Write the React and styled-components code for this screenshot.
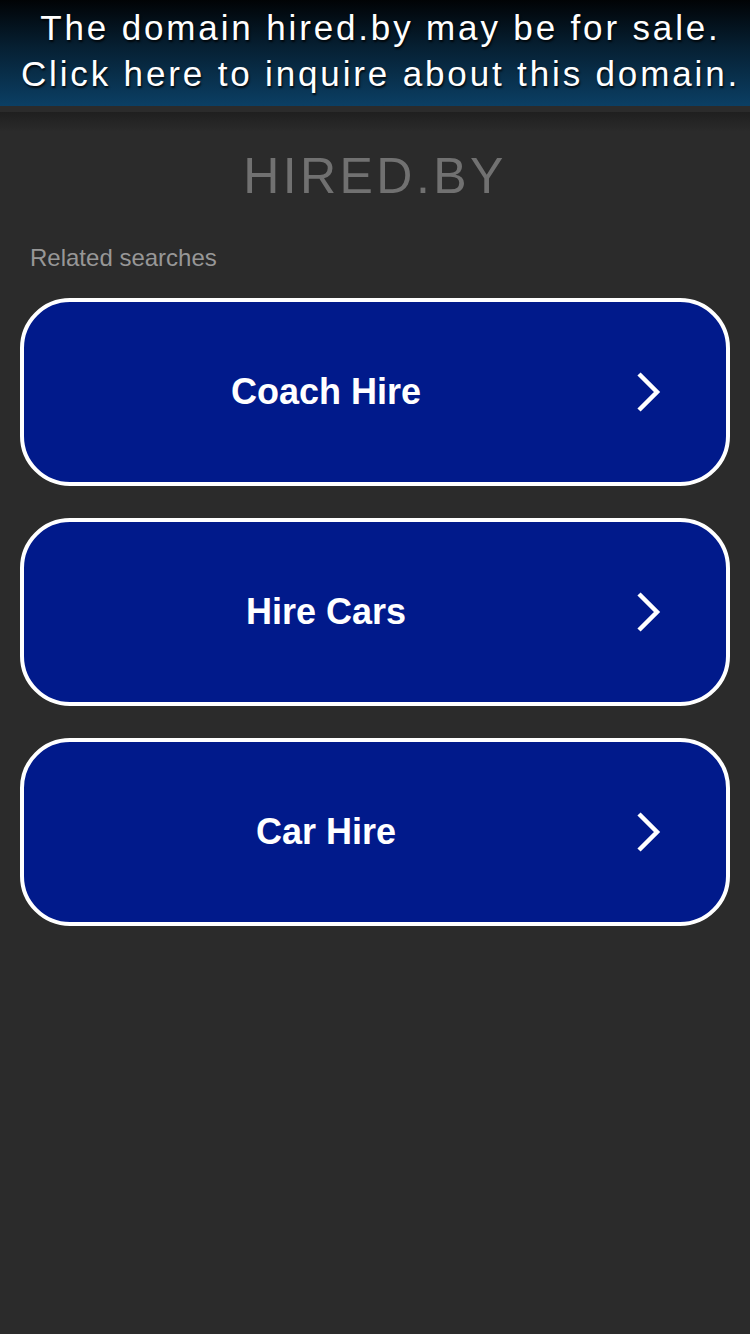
import React from "react";
import styled, { createGlobalStyle } from "styled-components";

const Global = createGlobalStyle`
  html, body { margin: 0; padding: 0; background: #2b2b2b; }
  body { font-family: "Liberation Sans", Arial, sans-serif; }
`;

const Page = styled.div`
  min-height: 1334px;
  background: #2b2b2b;
  display: flex;
  flex-direction: column;
`;

const Banner = styled.a`
  display: block;
  height: 106px;
  box-sizing: border-box;
  padding: 5px 0 0 11px;
  background: linear-gradient(to bottom, #010305 0%, #062033 45%, #0b3f64 100%);
  color: #fff;
  text-decoration: none;
  text-align: center;
  font-size: 35px;
  line-height: 46px;
  letter-spacing: 2.85px;
  text-shadow: 1px 2px 2px rgba(0, 0, 0, 0.8);
`;

const Main = styled.main`
  background:
    linear-gradient(to bottom, #2b2b2b 0, #2b2b2b 6px, #1f1f1f 6px, #2b2b2b 26px) top / 100% 26px no-repeat,
    #2b2b2b;
  padding: 38px 20px 0;
  display: flex;
  flex-direction: column;
`;

const Title = styled.h1`
  margin: 0;
  text-align: center;
  font-weight: normal;
  font-size: 50px;
  line-height: 64px;
  letter-spacing: 3.4px;
  color: #717171;
`;

const Label = styled.div`
  margin: 36px 0 0 10px;
  font-size: 24px;
  line-height: 28px;
  color: #979797;
`;

const List = styled.div`
  margin-top: 26px;
  display: flex;
  flex-direction: column;
  gap: 32px;
`;

const Card = styled.a`
  display: flex;
  align-items: center;
  height: 188px;
  box-sizing: border-box;
  border: 4px solid #fff;
  border-radius: 50px;
  background: #011a8b;
  color: #fff;
  text-decoration: none;
  padding-right: 64px;
`;

const CardText = styled.span`
  flex: 1;
  text-align: center;
  font-weight: bold;
  font-size: 36px;
`;

const Arrow = styled.svg`
  width: 26px;
  height: 40px;
  margin-left: 8px;
  flex: none;
`;

const items = ["Coach Hire", "Hire Cars", "Car Hire"];

export default function App() {
  return (
    <Page>
      <Global />
      <Banner href="#">
        The domain hired.by may be for sale.
        <br />
        Click here to inquire about this domain.
      </Banner>
      <Main>
        <Title>HIRED.BY</Title>
        <Label>Related searches</Label>
        <List>
          {items.map((t) => (
            <Card href="#" key={t}>
              <CardText>{t}</CardText>
              <Arrow viewBox="0 0 26 40">
                <polyline
                  points="3,2 21,20 3,38"
                  fill="none"
                  stroke="#fff"
                  strokeWidth="4.5"
                  strokeLinecap="butt"
                  strokeLinejoin="miter"
                />
              </Arrow>
            </Card>
          ))}
        </List>
      </Main>
    </Page>
  );
}
